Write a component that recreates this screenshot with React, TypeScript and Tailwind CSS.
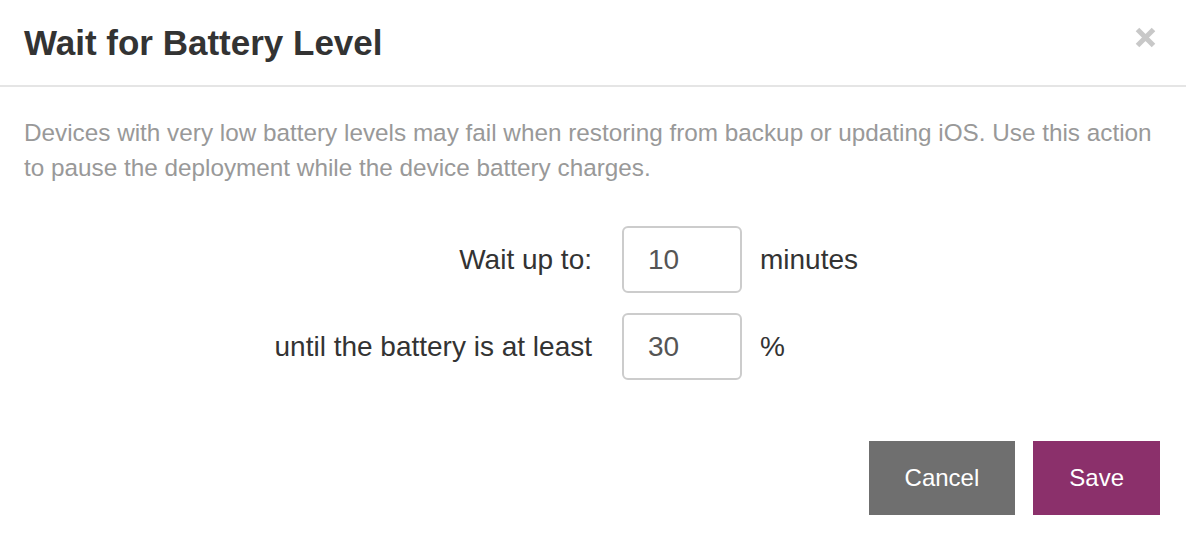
export default function App() {
  return (
    <div className="min-h-[542px] w-full bg-white font-['Liberation_Sans',Arial,sans-serif] text-[#333]">
      <header className="flex h-[87px] items-center justify-between border-b-2 border-[#e5e5e5] pl-6 pr-[29px]">
        <h1 className="text-[35px] font-bold leading-none text-[#333]">
          Wait for Battery Level
        </h1>
        <button type="button" aria-label="Close" className="mb-[10px] flex h-6 w-6 items-center justify-center">
          <svg width="21" height="21" viewBox="0 0 21 21">
            <path
              d="M2.5 2.5 L18.5 18.5 M18.5 2.5 L2.5 18.5"
              stroke="#c8c8c8"
              strokeWidth="5"
              strokeLinecap="butt"
            />
          </svg>
        </button>
      </header>

      <div className="px-6 pt-[28px]">
        <p className="text-[24.3px] leading-[35px] text-[#999]">
          Devices with very low battery levels may fail when restoring from backup or updating iOS. Use this action to pause the deployment while the device battery charges.
        </p>

        <div className="mt-[41px] flex flex-col gap-[20px]">
          <div className="flex items-center">
            <label className="w-[568px] text-right text-[28px]">Wait up to:</label>
            <input
              defaultValue="10"
              className="ml-[30px] h-[67px] w-[120px] rounded-[6px] border-2 border-[#ccc] px-[24px] text-[28px] text-[#555] outline-none"
            />
            <span className="ml-[18px] text-[28px]">minutes</span>
          </div>
          <div className="flex items-center">
            <label className="w-[568px] text-right text-[28px]">until the battery is at least</label>
            <input
              defaultValue="30"
              className="ml-[30px] h-[67px] w-[120px] rounded-[6px] border-2 border-[#ccc] px-[24px] text-[28px] text-[#555] outline-none"
            />
            <span className="ml-[18px] text-[28px]">%</span>
          </div>
        </div>

        <div className="mt-[61px] flex justify-end gap-[18px] pr-[2px]">
          <button type="button" className="h-[74px] bg-[#6f6f6f] px-[36px] text-[24px] text-white">
            Cancel
          </button>
          <button type="button" className="h-[74px] bg-[#8b306b] px-[36px] text-[24px] text-white">
            Save
          </button>
        </div>
      </div>
    </div>
  );
}
